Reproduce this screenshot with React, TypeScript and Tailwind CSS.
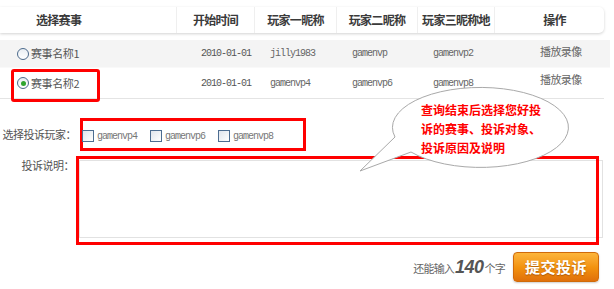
import React from 'react';

const cjk = "font-['Noto_Sans_CJK_SC',sans-serif]";
const mono = "font-['Liberation_Mono','Noto_Sans_CJK_SC',monospace]";

interface MatchRow {
  name: string;
  date: string;
  players: string[];
  checked: boolean;
}

const rows: MatchRow[] = [
  { name: '赛事名称1', date: '2010-01-01', players: ['jilly1983', 'gamenvp', 'gamenvp2'], checked: false },
  { name: '赛事名称2', date: '2010-01-01', players: ['gamenvp4', 'gamenvp6', 'gamenvp8'], checked: true },
];

const Radio = ({ checked }: { checked: boolean }) => (
  <span className="w-[12px] h-[12px] rounded-full border border-[#4c6a8c] bg-gradient-to-b from-[#e9eef3] to-white flex items-center justify-center shrink-0">
    {checked && <span className="w-[5px] h-[5px] rounded-full bg-[#2fa52f]" />}
  </span>
);

const Checkbox = () => (
  <span className="w-[12px] h-[12px] border border-[#4d6d91] bg-gradient-to-br from-[#dfe5ec] to-white shrink-0" />
);

export default function App() {
  return (
    <div className={`relative w-[614px] h-[289px] bg-white overflow-hidden pt-[7px] ${cjk}`}>
      {/* header */}
      <div className="w-[604px] h-[26px] bg-white rounded-r-[5px] shadow-[0_1px_3px_rgba(0,0,0,0.18)] grid grid-cols-[177px_78px_82px_81px_77px_109px] text-[12px] font-bold text-[#3a3a3a] tracking-[-0.7px]">
        <div className="flex items-center pl-[36px] border-r border-[#efefef]">选择赛事</div>
        <div className="flex items-center justify-center border-r border-[#efefef]">开始时间</div>
        <div className="flex items-center justify-center border-r border-[#efefef]">玩家一昵称</div>
        <div className="flex items-center justify-center border-r border-[#efefef]">玩家二昵称</div>
        <div className="flex items-center justify-center border-r border-[#efefef]">玩家三昵称地</div>
        <div className="flex items-center justify-center pl-[10px]">操作</div>
      </div>

      {/* rows */}
      <div className="mt-[7px] w-[610px]">
        {rows.map((r, i) => (
          <div
            key={i}
            className={`relative grid grid-cols-[177px_78px_82px_81px_77px_115px] text-[#555] ${
              i === 0 ? 'h-[28px] bg-[#f4f4f4] border-b border-[#f9f9f9]' : 'h-[31px] border-b border-[#e4e4e4] w-[604px]'
            }`}
          >
            <div className="flex items-center pl-[17px] gap-[2px] text-[11px] tracking-[-0.4px]">
              <Radio checked={r.checked} />
              <span>{r.name}</span>
            </div>
            <div className={`flex items-center pl-[24px] text-[10px] tracking-[-1px] ${mono}`}>{r.date}</div>
            {r.players.map((p) => (
              <div key={p} className={`flex items-center pl-[15px] text-[10px] tracking-[-1px] text-[#666] ${mono}`}>{p}</div>
            ))}
            <div className="flex items-start pt-[3px] pl-[45px] text-[11px] text-[#666] tracking-[-0.6px]">播放录像</div>
            {r.checked && (
              <div className="absolute left-[11px] top-[1px] w-[89px] h-[33px] border-[3px] border-[#ff0000] rounded-[3px]" />
            )}
          </div>
        ))}
      </div>

      {/* complaint players */}
      <div className="mt-[19px] flex items-center">
        <div className="w-[80px] pr-[4px] text-right text-[11px] text-[#555] tracking-[-0.5px] whitespace-nowrap">选择投诉玩家：</div>
        <div className="w-[226px] h-[33px] border-[3px] border-[#ff0000] flex items-center pt-[3px] gap-[13px]">
          {['gamenvp4', 'gamenvp6', 'gamenvp8'].map((p, i) => (
            <label key={p} className={`flex items-center gap-[3px] ${i === 0 ? '-ml-[1px]' : ''}`}>
              <Checkbox />
              <span className={`text-[10px] tracking-[-1px] text-[#777] ${mono}`}>{p}</span>
            </label>
          ))}
        </div>
      </div>

      {/* description */}
      <div className="mt-[9px] flex items-start">
        <div className="w-[79px] pr-[5px] text-right text-[11px] text-[#555] tracking-[-0.5px] -mt-[3px]">投诉说明：</div>
        <div className="relative">
          <div className="w-[524px] h-[78px] border border-[#e2e2e2]" />
          <div className="absolute -left-[3px] -top-[4px] w-[523px] h-[89px] border-[3px] border-[#ff0000]" />
        </div>
      </div>

      {/* submit */}
      <div className="mt-[14px] w-[599px] flex items-center justify-end gap-[8px]">
        <div className="flex items-baseline text-[11px] text-[#666]">
          <span className="tracking-[-0.8px]">还能输入</span>
          <span className="font-['Liberation_Sans',sans-serif] font-bold italic text-[18px] text-[#555] mx-[1px] tracking-[-0.5px]">140</span>
          <span className="tracking-[-0.8px]">个字</span>
        </div>
        <button className="w-[86px] h-[30px] rounded-[4px] border border-[#d06a0a] bg-gradient-to-b from-[#fcb53a] via-[#f3930f] to-[#e0700b] text-white font-bold text-[15px] tracking-[0.5px] shadow-[0_1px_2px_rgba(0,0,0,0.2)] [text-shadow:0_1px_1px_rgba(120,50,0,0.5)]">
          提交投诉
        </button>
      </div>

      {/* callout bubble */}
      <svg className="absolute left-[350px] top-[80px]" width="225" height="95" viewBox="350 80 225 95">
        <path d="M 411 152 A 88 40 0 1 0 395 137 L 360 171 Z" fill="#fff" stroke="#a9a9a9" strokeWidth="1" />
      </svg>
      <div className="absolute left-[421px] top-[100px] w-[130px] text-[12px] leading-[19px] font-bold text-[#ff0000]">
        <div>查询结束后选择您好投</div>
        <div>诉的赛事、投诉对象、</div>
        <div>投诉原因及说明</div>
      </div>
    </div>
  );
}
